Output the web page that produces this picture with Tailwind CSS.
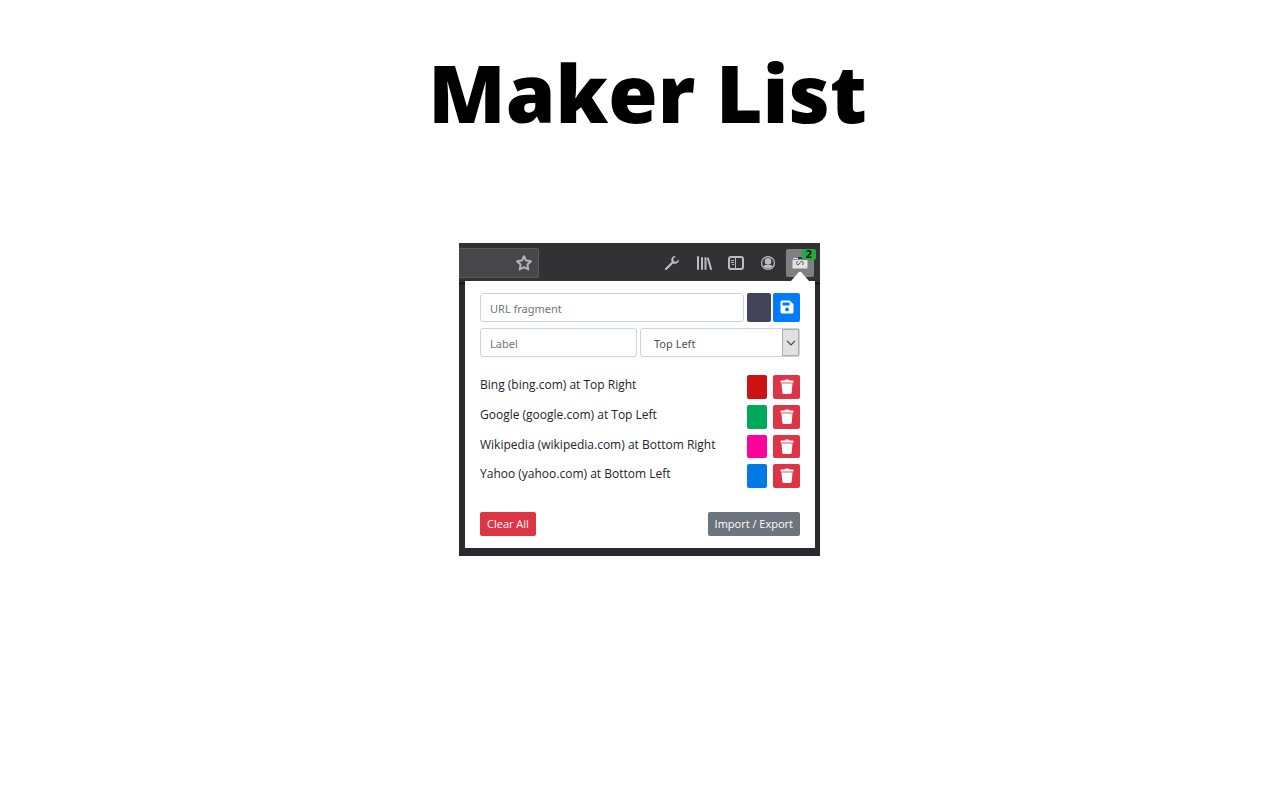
<!DOCTYPE html>
<html lang="en">
<head>
<meta charset="utf-8">
<meta name="viewport" content="width=device-width, initial-scale=1">
<title>Maker List</title>
<script src="https://cdn.jsdelivr.net/npm/@tailwindcss/browser@4"></script>
</head>
<body class="bg-white font-['Open_Sans',sans-serif] text-[12px] leading-[18px] text-[#212529]">
<svg class="hidden" aria-hidden="true"><symbol id="trash" viewBox="0 0 14 16"><path d="M.5 2.200Q.5 1.500 1.500 1.500h3Q5 .5 6 .5h2q1 0 1.500 1h3q1 0 1 .7V3.500H.5zM1.500 4.500h11l-.8 9a1.600 1.600 0 0 1-1.600 1.500H3.900a1.600 1.600 0 0 1-1.600-1.500z" fill="#fff"/><path d="M1 3.500h12v1H1z" fill="#f3b9c0"/></symbol></svg>
<main class="flex flex-col items-center px-4 pr-[17px]">
  <h1 class="mt-10 ml-4 text-[80px] leading-[104px] font-extrabold text-black">Maker List</h1>

  <section class="mt-[99px] w-full max-w-[361px] bg-[#2a2a2e] pb-2" aria-label="Browser window">
    <div class="flex h-[38px] items-center justify-between bg-[#323234] pr-[6px]">
      <div class="mt-[2px] flex h-[30px] w-20 items-center justify-end rounded-r-[2px] border border-l-0 border-[#5a5a5c] bg-[#474749] pr-[6px]">
        <button aria-label="Bookmark" class="size-4 text-[#b3b3b5]">
          <svg viewBox="0 0 16 16" class="size-4" fill="none" stroke="currentColor" stroke-width="2" stroke-linejoin="round"><path d="M8 1.200l2.100 4.400 4.900.6-3.600 3.400.9 4.900L8 12.100l-4.300 2.400.9-4.900L1 6.200l4.900-.6z"/></svg>
        </button>
      </div>
      <div class="mt-[2px] flex items-center gap-4 text-[#bdbdbf]">
        <button aria-label="Developer tools" class="size-4">
          <svg viewBox="0 0 16 16" class="size-4" fill="none" stroke="currentColor" stroke-linecap="round"><path d="M2 14L8.300 7.700" stroke-width="2.200"/><path d="M11.800 1.100a3.900 3.900 0 0 0-4.300 5.400c.6 1.700 2.400 2.600 4.200 2.200 2-.4 3.400-2.100 3.200-4.300l-2.700 2.300-2.400-.5-.5-2.500z" fill="currentColor" stroke="none"/></svg>
        </button>
        <button aria-label="Library" class="size-4">
          <svg viewBox="0 0 16 16" class="size-4" fill="none" stroke="currentColor" stroke-width="2" stroke-linecap="round"><path d="M2 2v12M6 3v11M9.500 3v11M12 3.500L15 14"/></svg>
        </button>
        <button aria-label="Sidebars" class="size-4">
          <svg viewBox="0 0 16 16" class="size-4" fill="none" stroke="currentColor"><rect x="1" y="2" width="14" height="12" rx="2" stroke-width="2"/><path d="M7.500 3v10"/><path d="M3 5.500h3M3 7.500h3M4 9.500h2"/></svg>
        </button>
        <button aria-label="Account" class="size-4">
          <svg viewBox="0 0 16 16" class="size-4" fill="currentColor"><circle cx="8" cy="8" r="6.400" fill="none" stroke="currentColor" stroke-width="1.300"/><circle cx="8" cy="6.400" r="3.300"/><path d="M3.500 11c1-1.500 2.500-1 4.500-1s3.500-.5 4.500 1C11.500 12.600 10 13.300 8 13.300S4.500 12.600 3.500 11z"/></svg>
        </button>
        <button aria-label="Maker List, 2 markers" class="relative -ml-[6px] flex size-7 items-center justify-center rounded-[2px] bg-[#808082]">
          <svg viewBox="0 0 16 16" class="size-4"><path d="M.5 2h15v11.500H.5z" fill="#e4e4e5"/><path d="M.5 2h15v2.500H.5z" fill="#1d3b5e"/><path d="M1 2.500h5v1.500H1z" fill="#d9d9da"/><path d="M5.500 6C4.300 7 4.500 10 6 10S8 6.200 9.800 6.200 11.500 9 10.500 10" fill="none" stroke="#555" stroke-width="1"/></svg>
          <span class="absolute top-0 -right-[2px] h-[11px] w-[14px] rounded-[2px] bg-[#28a745] text-center font-['DejaVu_Sans',sans-serif] text-[10px] leading-[11px] font-bold text-[#0c2a12]">2</span>
          <svg viewBox="0 0 18 10" class="absolute top-[22px] left-[5px] z-10 h-[10px] w-[18px]" fill="#fff"><path d="M0 10L7.500 1.500Q9 0 10.500 1.500L18 10z"/></svg>
        </button>
      </div>
    </div>

    <div class="relative mr-[5px] ml-[6px] bg-white px-[15px] py-3">
      <div class="absolute top-[2px] -left-[6px] h-px w-[6px] bg-[#0c0c0d]"></div>
      <div class="absolute top-[2px] -right-[5px] h-px w-[5px] bg-[#0c0c0d]"></div>
      <form class="flex flex-col gap-[6px] font-['Noto_Sans',sans-serif] text-[11px]">
        <div class="flex h-[29px]">
          <input type="text" aria-label="URL fragment" placeholder="URL fragment" class="mr-[3px] min-w-0 flex-1 rounded-[3px] border border-[#ced4da] px-[9px] pt-[2px] placeholder:text-[#6c757d]">
          <input type="color" aria-label="Marker colour" value="#424459" class="mr-[2px] h-full w-6 appearance-none overflow-hidden rounded-[2px] p-0 [&::-webkit-color-swatch]:border-0 [&::-webkit-color-swatch-wrapper]:p-0">
          <button type="button" aria-label="Save" class="flex w-[27px] items-center justify-center rounded-[2px] bg-[#007bff] pb-[2px] text-white">
            <svg viewBox="0 0 14 14" class="size-[14px]" fill="currentColor" fill-rule="evenodd"><path d="M2 .5h7.500L13.500 4v8a1.500 1.500 0 0 1-1.500 1.500H2A1.500 1.500 0 0 1 .5 12V2A1.500 1.500 0 0 1 2 .5zM2.500 2.500v3h7v-3zM7 7.500a1.900 1.900 0 1 0 0 3.800 1.900 1.900 0 0 0 0-3.800z"/></svg>
          </button>
        </div>
        <div class="flex h-[29px] gap-[3px]">
          <input type="text" aria-label="Label" placeholder="Label" class="min-w-0 flex-1 rounded-[3px] border border-[#ced4da] px-[9px] pt-[2px] placeholder:text-[#6c757d]">
          <div class="relative w-40">
            <select aria-label="Position" class="h-full w-full appearance-none rounded-[3px] border border-[#ced4da] bg-white pt-[2px] pl-[13px] text-[#495057]">
              <option>Top Left</option><option>Top Right</option><option>Bottom Left</option><option>Bottom Right</option>
            </select>
            <div class="pointer-events-none absolute inset-y-px right-px flex w-[17px] items-center justify-center border border-[#adadad] bg-[#e1e1e1]">
              <svg viewBox="0 0 10 6" class="h-[6px] w-[10px]" fill="none" stroke="#444" stroke-width="1.200"><path d="M1 .8l4 4 4-4"/></svg>
            </div>
          </div>
        </div>
      </form>

      <ul class="mt-[18px] flex flex-col gap-[6px]">
        <li class="flex h-6"><span class="flex-1 pt-px">Bing (bing.com) at Top Right</span>
          <input type="color" aria-label="Bing colour" value="#cc1212" class="mr-[6px] h-full w-5 appearance-none overflow-hidden rounded-[2px] p-0 [&::-webkit-color-swatch]:border-0 [&::-webkit-color-swatch-wrapper]:p-0">
          <button aria-label="Delete Bing" class="flex w-[27px] items-center justify-center rounded-[2px] bg-[#dc3545]"><svg class="h-4 w-[14px]"><use href="#trash"/></svg></button></li>
        <li class="flex h-6"><span class="flex-1 pt-px">Google (google.com) at Top Left</span>
          <input type="color" aria-label="Google colour" value="#00a85a" class="mr-[6px] h-full w-5 appearance-none overflow-hidden rounded-[2px] p-0 [&::-webkit-color-swatch]:border-0 [&::-webkit-color-swatch-wrapper]:p-0">
          <button aria-label="Delete Google" class="flex w-[27px] items-center justify-center rounded-[2px] bg-[#dc3545]"><svg class="h-4 w-[14px]"><use href="#trash"/></svg></button></li>
        <li class="flex h-[23px]"><span class="flex-1 pt-px">Wikipedia (wikipedia.com) at Bottom Right</span>
          <input type="color" aria-label="Wikipedia colour" value="#ff009d" class="mr-[6px] h-full w-5 appearance-none overflow-hidden rounded-[2px] p-0 [&::-webkit-color-swatch]:border-0 [&::-webkit-color-swatch-wrapper]:p-0">
          <button aria-label="Delete Wikipedia" class="flex w-[27px] items-center justify-center rounded-[2px] bg-[#dc3545]"><svg class="h-4 w-[14px]"><use href="#trash"/></svg></button></li>
        <li class="flex h-6"><span class="flex-1 pt-px">Yahoo (yahoo.com) at Bottom Left</span>
          <input type="color" aria-label="Yahoo colour" value="#007be5" class="mr-[6px] h-full w-5 appearance-none overflow-hidden rounded-[2px] p-0 [&::-webkit-color-swatch]:border-0 [&::-webkit-color-swatch-wrapper]:p-0">
          <button aria-label="Delete Yahoo" class="flex w-[27px] items-center justify-center rounded-[2px] bg-[#dc3545]"><svg class="h-4 w-[14px]"><use href="#trash"/></svg></button></li>
      </ul>

      <div class="mt-6 flex justify-between text-[11px] text-white">
        <button class="h-6 rounded-[2px] bg-[#dc3545] px-[7px]">Clear All</button>
        <button class="h-6 rounded-[2px] bg-[#6c757d] px-[7px]">Import / Export</button>
      </div>
    </div>
  </section>
</main>
</body>
</html>
